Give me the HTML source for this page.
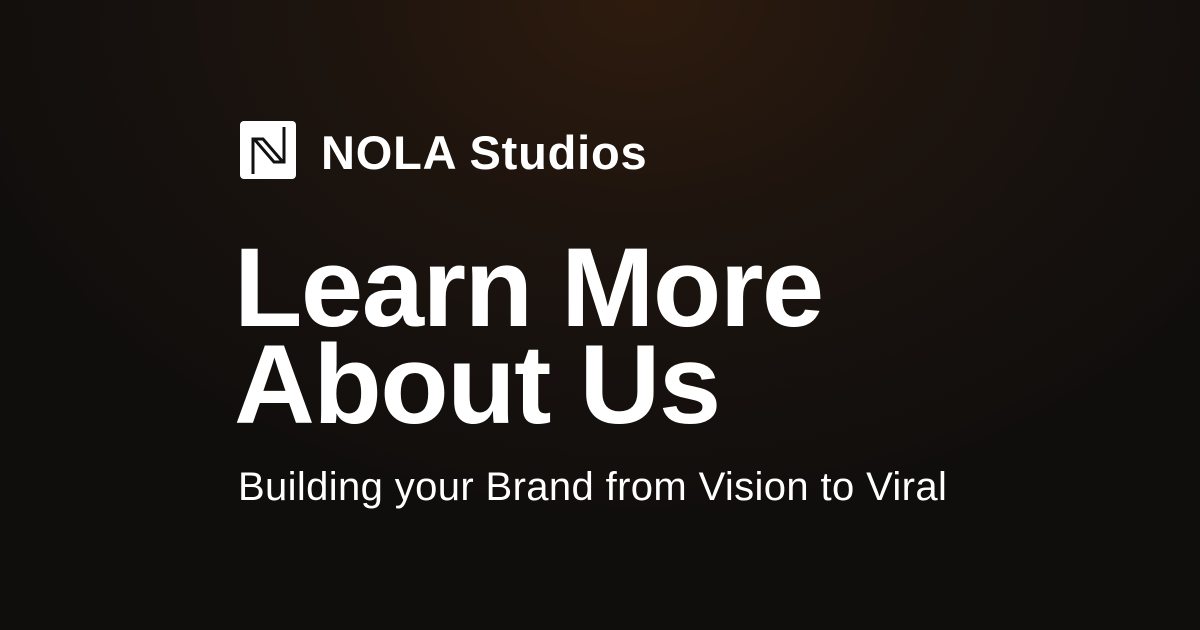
<!DOCTYPE html>
<html><head><style>
html,body{margin:0;padding:0}
body{width:1200px;height:630px;overflow:hidden;position:relative;
background:radial-gradient(ellipse 700px 520px at 640px 0px,#2e1b0e 0%,#1d140e 45%,#100e0d 100%);
font-family:"Liberation Sans",sans-serif;color:#fff}
.logo{position:absolute;left:240px;top:121px}
.brand{position:absolute;left:321px;top:126px;font-size:47px;font-weight:700;letter-spacing:0.8px;line-height:54px}
.h{position:absolute;left:234px;top:239px;font-size:112px;font-weight:700;letter-spacing:-1.5px;line-height:97px}
.sub{position:absolute;left:238px;top:463px;font-size:40px;line-height:48px;letter-spacing:0.37px}
</style></head><body>
<svg class="logo" width="56" height="58" viewBox="0 0 56 58">
<rect x="0" y="0" width="56" height="58" rx="4" fill="#fff"/>
<path d="M13 53 V18 H23 L42 40" fill="none" stroke="#111" stroke-width="3"/>
<path d="M44 6 V41 H34 L15 19" fill="none" stroke="#111" stroke-width="3"/>
</svg>
<div class="brand">NOLA Studios</div>
<div class="h">Learn More<br>About Us</div>
<div class="sub">Building your Brand from Vision to Viral</div>
</body></html>
